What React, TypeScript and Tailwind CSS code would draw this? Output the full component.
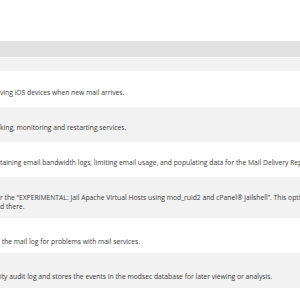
import type { FC } from "react";

type Row = { id: number; lines: string[]; box: string };

const rows: Row[] = [
	{ id: 1, lines: ["ving iOS devices when new mail arrives."], box: "h-[36px] pt-[17px] bg-white" },
	{ id: 2, lines: ["king, monitoring and restarting services."], box: "h-[35px] pt-[16px] bg-[#f2f2f2]" },
	{ id: 3, lines: ["taining email bandwidth logs, limiting email usage, and populating data for the Mail Delivery Reports"], box: "h-[35px] pt-[16px] bg-white" },
	{
		id: 4,
		lines: [
			"r the \u201CEXPERIMENTAL: Jail Apache Virtual Hosts using mod_ruid2 and cPanel\u00AE jailshell\u201D. This option",
			"d there.",
		],
		box: "h-[41px] pt-[16px] bg-[#f2f2f2]",
	},
	{ id: 5, lines: [" the mail log for problems with mail services."], box: "h-[35px] pt-[19px] bg-white" },
	{ id: 6, lines: ["ity audit log and stores the events in the modsec database for later viewing or analysis."], box: "h-[35px] pt-[19px] bg-[#f2f2f2]" },
];

const App: FC = () => {
	return (
		<div className="w-[300px] h-[300px] overflow-hidden bg-white font-['Open_Sans',sans-serif] text-[#3a3a3a]">
			<div className="h-[41px]" />
			<div className="h-[16px] bg-[#e1e1e1]" />
			<div className="h-[1px] bg-white" />
			<div className="h-[13px] bg-[#f2f2f2]" />
			{rows.map((row) => (
				<div key={row.id} className={row.box}>
					{row.lines.map((line, i) => (
						<p key={i} className="whitespace-pre text-[6.75px] leading-[9px]">
							{line}
						</p>
					))}
				</div>
			))}
			<div className="h-[12px] bg-white" />
		</div>
	);
};

export default App;
